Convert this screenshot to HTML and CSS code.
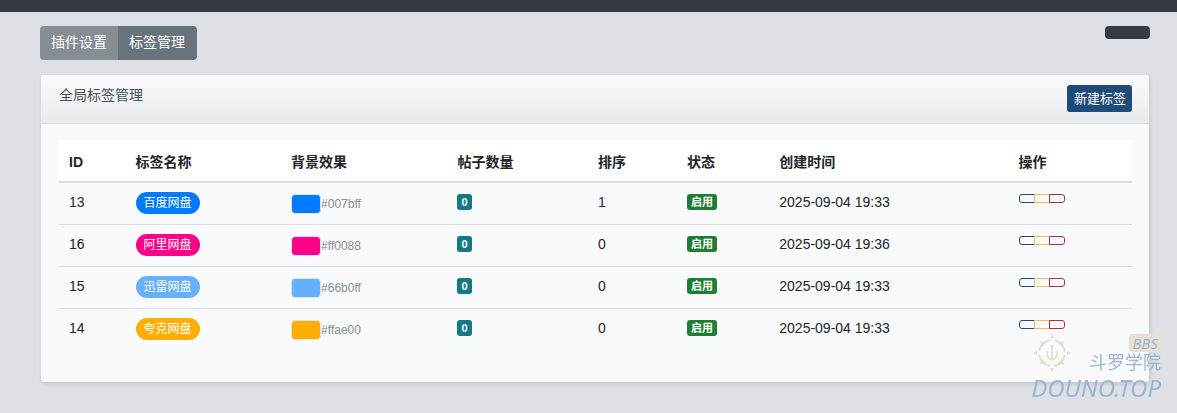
FILE: index.html
```html
<!DOCTYPE html>
<html lang="zh-CN">
<head>
    <meta charset="UTF-8">
    <meta name="viewport" content="width=device-width, initial-scale=1">
    <title>标签管理</title>
    <link rel="stylesheet" href="styles.css">
</head>
<body>
    <header class="topbar"></header>
    <main class="container">
        <div class="toolbar">
            <nav class="tabs">
                <a class="tab" href="#setting">插件设置</a>
                <a class="tab active" href="#tags">标签管理</a>
            </nav>
            <button class="btn-dark" type="button" aria-label="返回"></button>
        </div>

        <section class="card">
            <div class="card-header">
                <h1>全局标签管理</h1>
                <button class="btn-primary" type="button">新建标签</button>
            </div>
            <div class="card-body">
                <table class="table">
                    <thead>
                        <tr>
                            <th class="col-id">ID</th>
                            <th class="col-name">标签名称</th>
                            <th class="col-color">背景效果</th>
                            <th class="col-count">帖子数量</th>
                            <th class="col-rank">排序</th>
                            <th class="col-status">状态</th>
                            <th class="col-time">创建时间</th>
                            <th class="col-action">操作</th>
                        </tr>
                    </thead>
                    <tbody>
                        <tr>
                            <td>13</td>
                            <td><span class="pill blue">百度网盘</span></td>
                            <td><span class="color"><span class="swatch blue"></span>#007bff</span></td>
                            <td><span class="badge info">0</span></td>
                            <td>1</td>
                            <td><span class="badge success">启用</span></td>
                            <td>2025-09-04 19:33</td>
                            <td>
                                <div class="actions">
                                    <button class="edit" type="button" aria-label="编辑"></button>
                                    <button class="toggle" type="button" aria-label="禁用"></button>
                                    <button class="delete" type="button" aria-label="删除"></button>
                                </div>
                            </td>
                        </tr>
                        <tr>
                            <td>16</td>
                            <td><span class="pill pink">阿里网盘</span></td>
                            <td><span class="color"><span class="swatch pink"></span>#ff0088</span></td>
                            <td><span class="badge info">0</span></td>
                            <td>0</td>
                            <td><span class="badge success">启用</span></td>
                            <td>2025-09-04 19:36</td>
                            <td>
                                <div class="actions">
                                    <button class="edit" type="button" aria-label="编辑"></button>
                                    <button class="toggle" type="button" aria-label="禁用"></button>
                                    <button class="delete" type="button" aria-label="删除"></button>
                                </div>
                            </td>
                        </tr>
                        <tr>
                            <td>15</td>
                            <td><span class="pill sky">迅雷网盘</span></td>
                            <td><span class="color"><span class="swatch sky"></span>#66b0ff</span></td>
                            <td><span class="badge info">0</span></td>
                            <td>0</td>
                            <td><span class="badge success">启用</span></td>
                            <td>2025-09-04 19:33</td>
                            <td>
                                <div class="actions">
                                    <button class="edit" type="button" aria-label="编辑"></button>
                                    <button class="toggle" type="button" aria-label="禁用"></button>
                                    <button class="delete" type="button" aria-label="删除"></button>
                                </div>
                            </td>
                        </tr>
                        <tr>
                            <td>14</td>
                            <td><span class="pill orange">夸克网盘</span></td>
                            <td><span class="color"><span class="swatch orange"></span>#ffae00</span></td>
                            <td><span class="badge info">0</span></td>
                            <td>0</td>
                            <td><span class="badge success">启用</span></td>
                            <td>2025-09-04 19:33</td>
                            <td>
                                <div class="actions">
                                    <button class="edit" type="button" aria-label="编辑"></button>
                                    <button class="toggle" type="button" aria-label="禁用"></button>
                                    <button class="delete" type="button" aria-label="删除"></button>
                                </div>
                            </td>
                        </tr>
                    </tbody>
                </table>
            </div>
        </section>
    </main>

    <!-- 右下角水印 -->
    <div class="watermark">
        <div class="mark-top">
            <svg class="mark-logo" width="38" height="38" viewBox="0 0 38 38" fill="none" stroke="#dccfb4">
                <circle cx="19" cy="19" r="13" stroke-width="2" stroke-dasharray="16 4.42" stroke-dashoffset="-2.2"/>
                <path d="M19 0l2 4h-4zM19 38l2-4h-4zM0 19l4-2v4zM38 19l-4-2v4zM7 7l6 2-4 4zM31 7l-6 2 4 4zM7 31l6-2-4-4zM31 31l-6-2 4-4z" fill="#dccfb4" stroke="none"/>
                <path d="M19 11v15M14 17q-1 6 5 9q6-3 5-9" stroke-width="1.6"/>
            </svg>
            <div class="mark-name">
                <span class="mark-bbs">BBS</span>
                <span class="mark-cn">斗罗学院</span>
            </div>
        </div>
        <div class="mark-domain">DOUNO.TOP</div>
    </div>
</body>
</html>
```
FILE: styles.css
```css
* {
    box-sizing: border-box;
}
body {
    margin: 0;
    background: #dde0e5;
    color: #212529;
    font-family: "Liberation Sans", "Noto Sans CJK SC", sans-serif;
    font-size: 14px;
    line-height: 21px;
}
button {
    margin: 0;
    padding: 0;
    font-family: inherit;
    cursor: pointer;
}

/* 顶部 */
.topbar {
    height: 12px;
    background: #363a41;
}
.container {
    padding: 14px 27px 30px 40px;
}
.toolbar {
    display: flex;
    justify-content: space-between;
    align-items: flex-start;
    margin-bottom: 15px;
}
.tabs {
    display: flex;
    border-radius: 4px;
    overflow: hidden;
}
.tab {
    padding: 6px 11px 7px;
    background: #868e94;
    color: #fff;
    text-decoration: none;
}
.tab.active {
    padding-right: 12px;
    background: #69737c;
}
.btn-dark {
    width: 45px;
    height: 13px;
    border: 0;
    border-radius: 4px;
    background: #363a41;
}

/* 卡片 */
.card {
    margin-left: 1px;
    margin-right: 1px;
    background: #f8fafc;
    border-radius: 3px;
    box-shadow: 1px 2px 4px rgba(0, 0, 0, 0.12);
}
.card-header {
    display: flex;
    justify-content: space-between;
    align-items: flex-start;
    padding: 10px 17px 11px 18px;
    border-bottom: 1px solid #dadde1;
    border-radius: 3px 3px 0 0;
    background: linear-gradient(#f8fafc, #e8eaee);
}
.card-header h1 {
    margin: 0;
    font-size: 14px;
    font-weight: normal;
    color: #495057;
}
.btn-primary {
    padding: 0 6px 2px 7px;
    height: 27px;
    border: 0;
    border-radius: 3px;
    background: #1f4b7b;
    color: #fff;
    font-size: 13px;
}
.card-body {
    padding: 16px 17px 31px 18px;
}

/* 表格 */
.table {
    width: 100%;
    table-layout: fixed;
    border-collapse: separate;
    border-spacing: 0;
}
.table th {
    height: 43px;
    padding: 4px 10px 0;
    border-bottom: 2px solid #dcdee1;
    background: #fefefe;
    text-align: left;
    font-weight: bold;
}
.table td {
    height: 42px;
    padding: 9px 10px 0;
    border-bottom: 1px solid #dcdfe3;
    vertical-align: top;
}
.table tr:last-child td {
    border-bottom: 0;
}
.col-id { width: 6.2%; }
.col-name { width: 14.5%; }
.col-color { width: 15.5%; }
.col-count { width: 13.1%; }
.col-rank { width: 8.3%; }
.col-status { width: 8.6%; }
.col-time { width: 22.3%; }
.col-action { width: 11.5%; }

.pill {
    display: block;
    width: max-content;
    padding: 0 8px;
    border-radius: 11px;
    color: #fff;
    font-size: 12px;
    line-height: 22px;
}
.color {
    display: flex;
    align-items: center;
    padding-top: 2px;
    color: #868e94;
    font-size: 12px;
    line-height: 20px;
}
.swatch {
    width: 30px;
    height: 20px;
    border: 1px solid #dee2e6;
    border-radius: 4px;
}
.blue { background: #007bff; }
.pink { background: #ff0088; }
.sky { background: #66b0ff; }
.orange { background: #ffae00; }

.badge {
    display: block;
    width: max-content;
    margin-top: 2px;
    padding: 0 4px;
    border-radius: 3px;
    color: #fff;
    font-size: 11px;
    font-weight: bold;
    line-height: 16px;
}
.info { background: #147885; }
.success { background: #1e7e34; }

.actions {
    display: flex;
    padding-top: 2px;
}
.actions button {
    width: 16px;
    height: 9px;
    border: 1px solid;
    background: transparent;
}
.actions button + button {
    margin-left: -1px;
}
.actions .edit {
    border-color: #1f4b7b;
    border-radius: 3px 0 0 3px;
}
.actions .toggle {
    border-color: #e8c15c;
}
.actions .delete {
    border-color: #b02a45;
    border-radius: 0 3px 3px 0;
}

/* 水印 */
.watermark {
    position: fixed;
    right: 16px;
    bottom: 12px;
    color: #9db5d3;
    pointer-events: none;
}
.mark-top {
    display: flex;
    justify-content: space-between;
}
.mark-logo {
    margin-left: 2px;
    opacity: 0.7;
}
.mark-name {
    display: flex;
    flex-direction: column;
    align-items: flex-end;
}
.mark-bbs {
    padding: 0 3px;
    border-radius: 4px;
    background: #e6dfd2;
    font: italic 15px/18px "Noto Sans", sans-serif;
}
.mark-cn {
    font-size: 18px;
    line-height: 22px;
}
.mark-domain {
    font: italic 24px/27px "Noto Sans", sans-serif;
}
```
